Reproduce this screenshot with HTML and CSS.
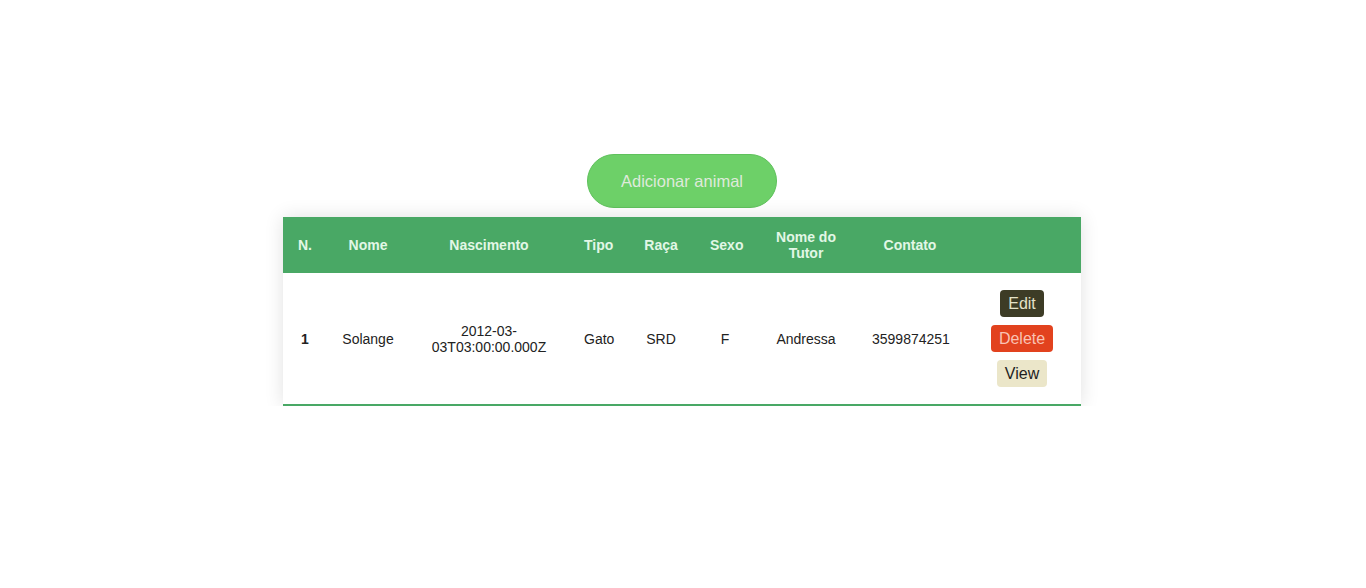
FILE: index.html
```html
<!DOCTYPE html>
<html lang="pt">
<head>
<meta charset="utf-8">
<title>Animais</title>
<link rel="stylesheet" href="styles.css">
</head>
<body>
<main class="page">
  <button class="add-btn">Adicionar animal</button>
  <table class="animals">
    <colgroup>
      <col class="c-n"><col class="c-nome"><col class="c-nasc"><col class="c-tipo"><col class="c-raca"><col class="c-sexo"><col class="c-tutor"><col class="c-contato"><col class="c-acoes">
    </colgroup>
    <thead>
      <tr>
        <th>N.</th><th>Nome</th><th>Nascimento</th><th>Tipo</th><th>Raça</th><th>Sexo</th><th>Nome do Tutor</th><th>Contato</th><th></th>
      </tr>
    </thead>
    <tbody>
      <tr>
        <td class="num">1</td>
        <td>Solange</td>
        <td>2012-03-03T03:00:00.000Z</td>
        <td>Gato</td>
        <td>SRD</td>
        <td>F</td>
        <td>Andressa</td>
        <td>3599874251</td>
        <td class="actions">
          <div class="action-list">
            <button class="btn btn-edit">Edit</button>
            <button class="btn btn-delete">Delete</button>
            <button class="btn btn-view">View</button>
          </div>
        </td>
      </tr>
    </tbody>
  </table>
</main>
</body>
</html>
```

FILE: styles.css
```css
html, body {
  margin: 0;
  padding: 0;
  background: #ffffff;
  font-family: "Liberation Sans", Arial, sans-serif;
}

.page {
  display: flex;
  flex-direction: column;
  align-items: center;
  padding-top: 154px;
  gap: 9px;
}

.add-btn {
  font-family: "Liberation Sans", Arial, sans-serif;
  font-size: 16.5px;
  line-height: 18px;
  height: 54px;
  width: 190px;
  padding: 0;
  margin-left: -2px;
  border: 1px solid #5fc15c;
  border-radius: 27px;
  background: #6dd068;
  color: #dfeadb;
  cursor: pointer;
}

.animals {
  width: 798px;
  margin-right: 2px;
  table-layout: fixed;
  border-collapse: collapse;
  font-size: 14px;
  color: #222222;
  background: #ffffff;
  box-shadow: 0 0 18px rgba(0, 0, 0, 0.12);
  border-bottom: 2px solid #49a865;
}

.c-n { width: 44px; }
.c-nome { width: 82px; }
.c-nasc { width: 160px; }
.c-tipo { width: 58px; }
.c-raca { width: 68px; }
.c-sexo { width: 60px; }
.c-tutor { width: 102px; }
.c-contato { width: 106px; }
.c-acoes { width: 118px; }

.animals th {
  background: #49a865;
  color: #e2f7e6;
  font-weight: bold;
  padding: 12px 15px;
  line-height: 16px;
  text-align: center;
  vertical-align: middle;
  height: 32px;
}

.animals td {
  padding: 12px 15px;
  line-height: 16px;
  text-align: center;
  vertical-align: middle;
}

.animals td.num {
  font-weight: bold;
}

.animals td.actions {
  padding: 17px 15px;
}

.action-list {
  display: flex;
  flex-direction: column;
  align-items: center;
  gap: 8px;
}

.btn {
  font-family: "Liberation Sans", Arial, sans-serif;
  font-size: 16px;
  line-height: 19px;
  padding: 4px 8px;
  border: none;
  border-radius: 4px;
  cursor: pointer;
}

.btn-edit {
  background: #3d3c26;
  color: #e4e2c8;
}

.btn-delete {
  background: #e2421e;
  color: #f9c2b4;
}

.btn-view {
  background: #ebe6c9;
  color: #1e1e1e;
}
```
